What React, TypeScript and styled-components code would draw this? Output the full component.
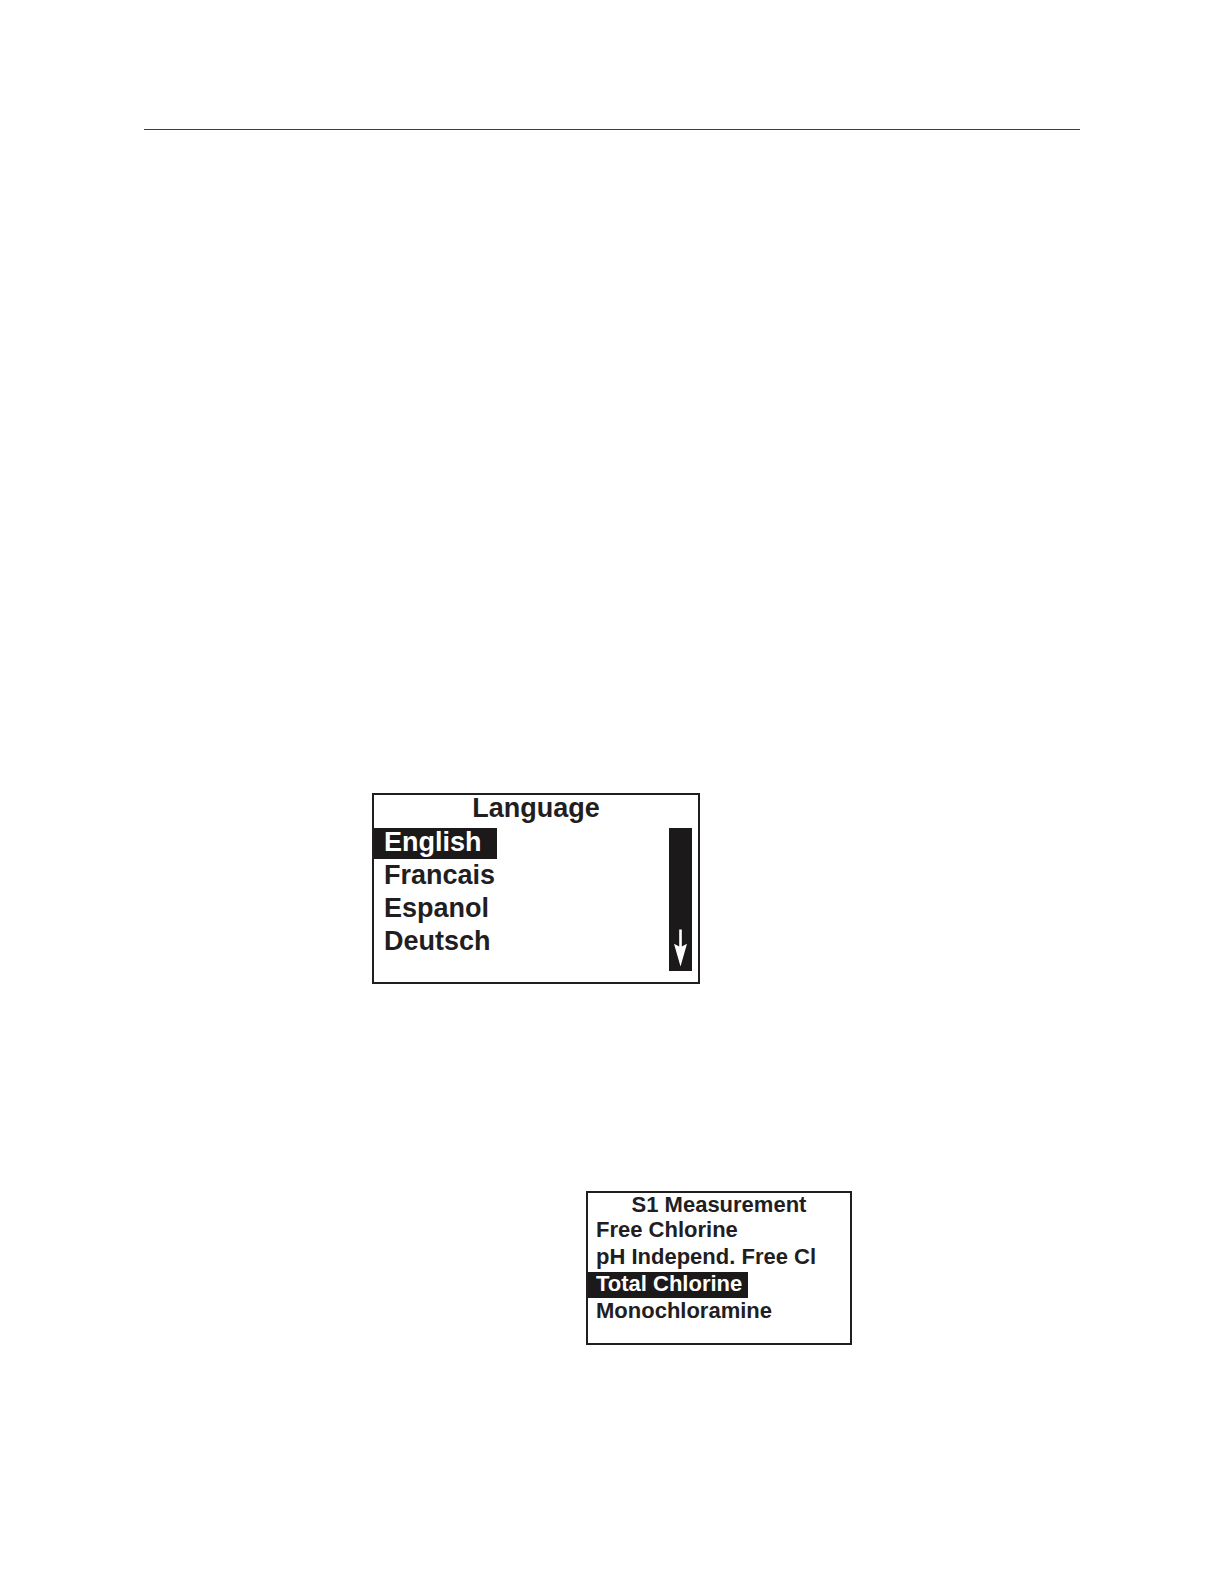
import React, { useState } from "react";
import styled, { createGlobalStyle } from "styled-components";

const ink = "#221e1f";
const fill = "#1b191a";

const GlobalStyle = createGlobalStyle`
  *, *::before, *::after { box-sizing: border-box; }
  body {
    margin: 0;
    background: #fff;
    color: ${ink};
    font-family: "Liberation Sans", Arial, sans-serif;
  }
`;

const Page = styled.main`
  display: flex;
  flex-direction: column;
  padding: 129px 144px 240px;
`;

const Rule = styled.hr`
  width: 100%;
  height: 1px;
  margin: 0 0 663px;
  border: 0;
  background: #0f4a86;
`;

const Figures = styled.div`
  display: flex;
  flex-direction: column;
  align-items: flex-start;
  gap: 207px;
`;

type Size = "large" | "small";

const Screen = styled.section<{ $size: Size }>`
  width: ${(p) => (p.$size === "large" ? 328 : 266)}px;
  max-width: 100%;
  margin-left: ${(p) => (p.$size === "large" ? 228 : 442)}px;
  padding-bottom: ${(p) => (p.$size === "large" ? 11 : 18)}px;
  border: 2px solid ${ink};
  background: #fff;
  font-size: ${(p) => (p.$size === "large" ? 27 : 22)}px;
  font-weight: 700;
`;

const Title = styled.h2<{ $size: Size }>`
  margin: 0;
  padding-bottom: ${(p) => (p.$size === "large" ? 7 : 2)}px;
  font-size: inherit;
  line-height: ${(p) => (p.$size === "large" ? 26 : 23)}px;
  text-align: center;
`;

const Body = styled.div`
  display: flex;
  justify-content: space-between;
  padding-right: 6px;
`;

const Menu = styled.ul<{ $size: Size }>`
  display: flex;
  flex-direction: column;
  gap: ${(p) => (p.$size === "large" ? 2 : 1)}px;
  margin: 0;
  padding: 0;
  list-style: none;
`;

const Row = styled.li`
  display: flex;
`;

const Choice = styled.button<{ $size: Size }>`
  padding: ${(p) => (p.$size === "large" ? "0 15px 2px 10px" : "0 6px 2px 8px")};
  border: 0;
  background: transparent;
  color: ${ink};
  font: inherit;
  line-height: ${(p) => (p.$size === "large" ? 29 : 24)}px;
  white-space: nowrap;
  cursor: pointer;

  &[aria-pressed="true"] {
    background: ${fill};
    color: #fff;
  }
`;

const ScrollBar = styled.button`
  display: flex;
  align-items: flex-end;
  justify-content: center;
  width: 23px;
  height: 143px;
  padding: 0 0 4px;
  border: 0;
  background: ${fill};
  cursor: pointer;
`;

interface DisplayProps {
  title: string;
  size: Size;
  options: string[];
  initial: string;
  scrollable?: boolean;
}

function Display({ title, size, options, initial, scrollable }: DisplayProps) {
  const [selected, setSelected] = useState(initial);
  const next = () =>
    setSelected(options[Math.min(options.indexOf(selected) + 1, options.length - 1)]);

  return (
    <Screen $size={size} aria-label={title}>
      <Title $size={size}>{title}</Title>
      <Body>
        <Menu $size={size}>
          {options.map((option) => (
            <Row key={option}>
              <Choice
                type="button"
                $size={size}
                aria-pressed={option === selected}
                onClick={() => setSelected(option)}
              >
                {option}
              </Choice>
            </Row>
          ))}
        </Menu>
        {scrollable && (
          <ScrollBar type="button" aria-label="Scroll down" onClick={next}>
            <svg width="13" height="38" viewBox="0 0 13 38" fill="#fff" aria-hidden="true">
              <path d="M5.2 0.5h2.6v17l5.2-2.7L6.5 37.5 0 14.8l5.2 2.7z" />
            </svg>
          </ScrollBar>
        )}
      </Body>
    </Screen>
  );
}

export default function App() {
  return (
    <>
      <GlobalStyle />
      <Page>
        <Rule />
        <Figures>
          <Display
            title="Language"
            size="large"
            options={["English", "Francais", "Espanol", "Deutsch"]}
            initial="English"
            scrollable
          />
          <Display
            title="S1 Measurement"
            size="small"
            options={["Free Chlorine", "pH Independ. Free Cl", "Total Chlorine", "Monochloramine"]}
            initial="Total Chlorine"
          />
        </Figures>
      </Page>
    </>
  );
}
